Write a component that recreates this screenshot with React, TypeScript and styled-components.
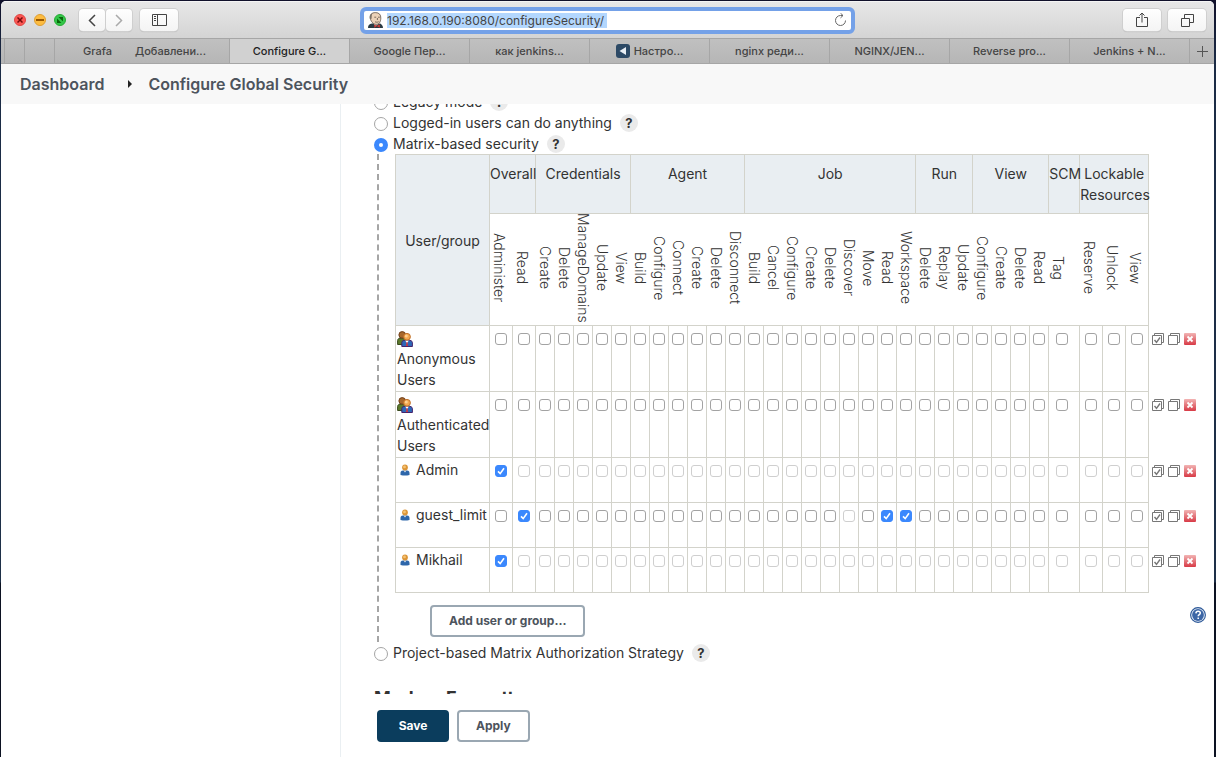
import React, { useState } from 'react';
import styled, { createGlobalStyle, css } from 'styled-components';

const GlobalStyle = createGlobalStyle`
  *, *::before, *::after { box-sizing: border-box; }
  html, body { margin: 0; }
  body {
    background: linear-gradient(#10102a, #1b2b45 60px, #1e3048 582px, #0c1222 583px);
    color: #333;
    font: 14px/21px Inter, "Liberation Sans", sans-serif;
  }
  button, input { font: inherit; }
`;

const Window = styled.div`
  display: flex;
  flex-direction: column;
  height: calc(100vh - 1px);
  margin: 1px 2px 0 1px;
  overflow: hidden;
  border-radius: 5px 5px 0 0;
  background: #fff;
`;

/* ---------- browser chrome ---------- */

const Toolbar = styled.header`
  display: grid;
  grid-template-columns: 1fr minmax(200px, 495px) 1fr;
  align-items: center;
  height: 37px;
  flex: none;
  padding: 0 8px;
  background: linear-gradient(#e7e7e7, #d4d4d4);
  border-top: 1px solid #f4f4f4;
`;

const ToolGroup = styled.div<{ $end?: boolean }>`
  display: flex;
  align-items: center;
  gap: ${(p) => (p.$end ? 7 : 8)}px;
  padding-left: 5px;
  justify-content: ${(p) => (p.$end ? 'flex-end' : 'flex-start')};
`;

const Lights = styled.div`
  display: flex;
  gap: 8px;
  margin-right: 5px;
`;

const Light = styled.button<{ $color: string; $edge: string }>`
  display: grid;
  place-items: center;
  width: 12px;
  height: 12px;
  padding: 0;
  border: 1px solid ${(p) => p.$edge};
  border-radius: 50%;
  background: ${(p) => p.$color};
`;

const NavPair = styled.div`
  display: flex;
  gap: 1px;
`;

const ToolButton = styled.button<{ $wide?: boolean }>`
  display: grid;
  place-items: center;
  width: ${(p) => (p.$wide ? 38 : 26)}px;
  height: 22px;
  padding: 0;
  border: 0;
  border-radius: 4px;
  background: linear-gradient(#fefefe, #f4f4f4);
  box-shadow: 0 0 0 1px #cfcfcf, 0 1px 1px #b0b0b0;
`;

const Address = styled.label`
  display: flex;
  align-items: center;
  gap: 4px;
  height: 27px;
  padding: 0 4px;
  border: 4px solid #74a1e8;
  border-radius: 6px;
  background: #fff;
`;

const AddressInput = styled.input`
  width: 220px;
  height: 15px;
  padding: 0;
  border: 0;
  outline: 0;
  background: #b3d7fe;
  color: #444;
  font-size: 12px;
  line-height: 15px;
`;

const Reload = styled.button`
  display: grid;
  margin-left: auto;
  padding: 0;
  border: 0;
  background: none;
`;

const TabBar = styled.nav`
  display: flex;
  flex: none;
  height: 26px;
  border: solid #a6a6a6;
  border-width: 1px 0;
  background: linear-gradient(#c0c0c0, #b6b6b6);
`;

const Tab = styled.a<{ $active?: boolean; $width?: number; $cut?: boolean }>`
  display: flex;
  align-items: center;
  justify-content: ${(p) => (p.$cut ? 'flex-end' : 'center')};
  gap: 4px;
  flex: ${(p) => (p.$width ? `0 0 ${p.$width}px` : '1 1 0')};
  overflow: hidden;
  border-right: ${(p) => (p.$cut ? 0 : 1)}px solid #a6a6a6;
  background: ${(p) => (p.$active ? '#d1d1d1' : 'transparent')};
  color: ${(p) => (p.$active ? '#222' : '#444')};
  font-size: 11px;
  font-weight: 500;
  text-decoration: none;
  white-space: nowrap;
`;

const NewTab = styled.button`
  display: grid;
  place-items: center;
  width: 24px;
  padding: 0;
  border: 0;
  background: none;
`;

/* ---------- page ---------- */

const Breadcrumbs = styled.nav`
  display: flex;
  align-items: center;
  gap: 16px;
  flex: none;
  height: 40px;
  padding: 0 19px;
  background: #f8f8f8;
`;

const Crumb = styled.a`
  color: #4d545d;
  font-size: 16px;
  font-weight: 600;
  text-decoration: none;
`;

const CrumbArrow = styled.svg`
  margin-left: 8px;
`;

const Body = styled.div`
  display: flex;
  flex: 1;
  min-height: 0;
`;

const SidePanel = styled.aside`
  flex: 0 0 340px;
  border-right: 1px solid #eaeff2;
`;

const Main = styled.main`
  display: flex;
  flex-direction: column;
  flex: 1;
  min-width: 0;
`;

const ScrollArea = styled.div`
  flex: 1;
  min-height: 0;
  padding: 0 8px 0 33px;
  overflow: hidden;
`;

const Form = styled.form`
  margin-top: -13px;
`;

const OptionRow = styled.div`
  display: flex;
  align-items: center;
  gap: 8px;
  height: 21px;
`;

const OptionLabel = styled.label`
  display: flex;
  align-items: center;
  gap: 5px;
`;

const Radio = styled.input`
  appearance: none;
  width: 14px;
  height: 14px;
  margin: 3px 0 0;
  border: 1px solid #a5a5a5;
  border-radius: 50%;
  background: #fff;
  &:checked {
    border: 5px solid #3b88fd;
  }
`;

const HelpButton = styled.button`
  width: 18px;
  height: 18px;
  padding: 0;
  border: 0;
  border-radius: 50%;
  background: #eaeaea;
  color: #333;
  font-size: 13px;
  font-weight: 700;
  line-height: 18px;
`;

const Nested = styled.div`
  margin-left: 3px;
  padding-left: 16px;
  border-left: 2px dashed #a5a5a5;
`;

const Matrix = styled.table`
  width: 802px;
  table-layout: fixed;
  border-collapse: collapse;
`;

const line = css`
  border: 1px solid #d3d3cb;
`;

const GroupHead = styled.th<{ $middle?: boolean }>`
  ${line}
  height: 59px;
  padding: ${(p) => (p.$middle ? '0' : '8px 0 0')};
  background: #e9eef2;
  font-weight: 400;
  vertical-align: ${(p) => (p.$middle ? 'middle' : 'top')};
`;

const PermissionHead = styled.th`
  height: 112px;
  padding: 0;
  border-bottom: 1px solid #d3d3cb;
  font-weight: 300;
  vertical-align: top;
  &:nth-last-child(2) {
    border-right: 1px solid #d3d3cb;
  }
`;

const Vertical = styled.span`
  display: flex;
  flex-direction: column;
  align-items: center;
  justify-content: center;
  height: 108px;
  line-height: 18px;
  white-space: nowrap;
  writing-mode: vertical-rl;
`;

const VerticalText = styled.span`
  writing-mode: vertical-rl;
`;

const UserCell = styled.th<{ $group?: boolean }>`
  ${line}
  height: ${(p) => (p.$group ? 66 : 45)}px;
  padding: ${(p) => (p.$group ? '2px 0 0 1px' : '1px 0 0 4px')};
  font-weight: 400;
  text-align: left;
  vertical-align: top;
`;

const UserName = styled.span<{ $group?: boolean }>`
  display: flex;
  flex-direction: ${(p) => (p.$group ? 'column' : 'row')};
  align-items: ${(p) => (p.$group ? 'flex-start' : 'center')};
  gap: ${(p) => (p.$group ? 1 : 6)}px;
  padding-top: ${(p) => (p.$group ? 3 : 0)}px;
`;

const PermissionCell = styled.td<{ $shift?: boolean }>`
  ${line}
  padding: 7px ${(p) => (p.$shift ? 5 : 0)}px 0 0;
  line-height: 0;
  text-align: center;
  vertical-align: top;
`;

const Check = styled.input`
  appearance: none;
  width: 12px;
  height: 12px;
  margin: 0;
  border: 1px solid #a3a3a3;
  border-radius: 3px;
  background: #fff;
  &:disabled {
    border-color: #cfcfcf;
  }
  &:checked {
    border-color: #3b88fd;
    background: #3b88fd
      url("data:image/svg+xml,%3Csvg xmlns='http://www.w3.org/2000/svg' viewBox='0 0 10 10'%3E%3Cpath d='M2 5.4 4.2 7.6 8 2.3' fill='none' stroke='white' stroke-width='1.6'/%3E%3C/svg%3E");
  }
`;

const ActionCell = styled.td`
  padding: 7px 0 0 3px;
  vertical-align: top;
`;

const Actions = styled.div`
  display: flex;
  gap: 4px;
`;

const IconButton = styled.button`
  display: grid;
  padding: 0;
  border: 0;
  background: none;
`;

const AddRow = styled.div`
  display: flex;
  align-items: flex-start;
  justify-content: space-between;
  padding: 12px 0 5px 35px;
`;

const HelpSlot = styled.div`
  padding-top: 2px;
`;

const Button = styled.button<{ $primary?: boolean }>`
  height: 32px;
  min-width: 72px;
  padding: 0 17px 1px;
  border: 2px solid ${(p) => (p.$primary ? '#0b3d5d' : '#9aa7b2')};
  border-radius: 4px;
  background: ${(p) => (p.$primary ? '#0b3d5d' : '#fff')};
  color: ${(p) => (p.$primary ? '#fff' : '#4d545d')};
  font-size: 12px;
  font-weight: 700;
`;

const SectionTitle = styled.h2`
  margin: 23px 0 0;
  font-size: 18px;
  line-height: 24px;
  font-weight: 700;
`;

const BottomBar = styled.footer`
  display: flex;
  gap: 8px;
  flex: none;
  padding: 16px 36px 15px;
  background: #fff;
`;

/* ---------- icons ---------- */

const JenkinsIcon = () => (
  <svg width="15" height="16" viewBox="0 0 15 16">
    <path d="M0 16c0-2.500 1-4 4-4.500l7-.3c2.500.5 4 2.300 4 4.800z" fill="#2b3b43" />
    <path d="M4.500 10.500 7.500 14l4-2.500V9.500z" fill="#f4f0ea" />
    <path d="M2.200 6C1.700 2.500 4 .6 7.500.6c3.700 0 5.500 2.200 5.300 5.600-.1 3.500-1.600 6.200-4.500 6.200C5.200 12.400 2.900 9.500 2.200 6z" fill="#ecd2b8" stroke="#4a3d35" strokeWidth=".7" />
    <path d="M1.900 7C1.300 3.500 2.800 1.400 4.600.9c-1 1.500-.8 3.200-1 5.800z" fill="#7a7066" />
    <path d="M6.300 5.200h1.900M10 5.200h1.800M9.400 6v2M7 9.800c1.300.6 2.500.5 3.700-.1" stroke="#4a3d35" strokeWidth=".7" fill="none" />
    <path d="M9 14 6.300 12.600v3.200zM8.600 14l3.200-1.400v3.200z" fill="#d33833" />
  </svg>
);

const GroupIcon = () => (
  <svg width="16" height="16" viewBox="0 0 16 16">
    <path d="M.6 13.500V9.700C.8 7.500 2 7 4.500 7S8 7.500 8 9.700v3.800z" fill="#5c7a2c" stroke="#37481c" />
    <circle cx="5.200" cy="3.900" r="3.300" fill="#a8682c" stroke="#70401c" />
    <path d="M4.800 15.500v-4c.2-1.800 1.500-2.300 5.200-2.300s5.200.5 5.400 2.300v4z" fill="#2e68b8" stroke="#46246c" />
    <path d="m8.300 9.500 1.700 3.300 1.700-3.300z" fill="#fff" />
    <path d="M9.500 11h1l.4 4h-1.800z" fill="#d33" />
    <circle cx="10" cy="5.800" r="3.400" fill="#f3a850" stroke="#c0702a" />
    <circle cx="9.300" cy="4.900" r="1.500" fill="#ffd08e" />
  </svg>
);

const PersonIcon = () => (
  <svg width="10" height="12" viewBox="0 0 10 12">
    <path d="M.5 11V8.800C.7 7 2 6.300 5 6.300s4.300.7 4.500 2.500V11q-4.500 1-9 0z" fill="#2d66aa" />
    <path d="m3.600 6.500 1.400 2 1.400-2z" fill="#dce8f5" />
    <circle cx="5" cy="3.500" r="2.900" fill="#dc9638" />
    <circle cx="4.500" cy="2.900" r="1.400" fill="#f5c272" />
  </svg>
);

const StackIcon = ({ checked }: { checked?: boolean }) => (
  <svg width="12" height="12" viewBox="0 0 12 12" fill="none" stroke="#777">
    <path d="M2.500 2V.5h9v9H10M.5 2.500h9v9h-9z" />
    {checked && <path d="m2.500 7 2 2.300L8 4.500" strokeWidth="1.400" />}
  </svg>
);

const RemoveIcon = () => (
  <svg width="12" height="12" viewBox="0 0 12 12">
    <defs>
      <linearGradient id="remove" x2="0" y2="1">
        <stop stopColor="#f2b4b4" />
        <stop offset=".5" stopColor="#e4777c" />
        <stop offset="1" stopColor="#d83a46" />
      </linearGradient>
    </defs>
    <rect width="12" height="12" rx="1" fill="url(#remove)" />
    <path d="m3.500 3.500 5 5m0-5-5 5" stroke="#fff" strokeWidth="1.800" />
  </svg>
);

const BlueHelpIcon = () => (
  <svg width="16" height="16" viewBox="0 0 16 16">
    <circle cx="8" cy="8" r="7.400" fill="#e6edf7" stroke="#2b5797" strokeWidth="1.100" />
    <circle cx="8" cy="8" r="5.900" fill="#3c66a6" />
    <path d="M5.900 6.400C6 5 6.800 4.300 8.100 4.300c1.300 0 2.200.7 2.200 1.800 0 1.600-2.100 1.600-2.100 3.200M8.200 10.500v1.500" stroke="#fff" strokeWidth="1.500" fill="none" />
  </svg>
);

/* ---------- data ---------- */

const groups: { name: string; permissions: string[] }[] = [
  { name: 'Overall', permissions: ['Administer', 'Read'] },
  { name: 'Credentials', permissions: ['Create', 'Delete', 'ManageDomains', 'Update', 'View'] },
  { name: 'Agent', permissions: ['Build', 'Configure', 'Connect', 'Create', 'Delete', 'Disconnect'] },
  { name: 'Job', permissions: ['Build', 'Cancel', 'Configure', 'Create', 'Delete', 'Discover', 'Move', 'Read', 'Workspace'] },
  { name: 'Run', permissions: ['Delete', 'Replay', 'Update'] },
  { name: 'View', permissions: ['Configure', 'Create', 'Delete', 'Read'] },
  { name: 'SCM', permissions: ['Tag'] },
  { name: 'Lockable Resources', permissions: ['Reserve', 'Unlock', 'View'] },
];

const columns = groups.flatMap((g) => g.permissions.map((p) => ({ group: g.name, key: `${g.name}/${p}`, label: p })));

const columnWidth = (group: string) =>
  group === 'SCM' ? 31 : group === 'Overall' || group === 'Lockable Resources' ? 23 : 19;

const users = [
  { name: 'Anonymous Users', group: true, granted: [] },
  { name: 'Authenticated Users', group: true, granted: [] },
  { name: 'Admin', granted: ['Overall/Administer'] },
  { name: 'guest_limit', granted: ['Overall/Read', 'Job/Read', 'Job/Workspace'] },
  { name: 'Mikhail', granted: ['Overall/Administer'] },
] as { name: string; group?: boolean; granted: string[] }[];

const tabs = ['Google Пер...', 'как jenkins...', 'Настро...', 'nginx реди...', 'NGINX/JEN...', 'Reverse pro...', 'Jenkins + N...'];

const Col = styled.col<{ $width: number }>`
  width: ${(p) => p.$width}px;
`;

function Option({ label, value, current, onPick }: { label: string; value: string; current: string; onPick: (v: string) => void }) {
  return (
    <OptionRow>
      <OptionLabel>
        <Radio type="radio" name="strategy" checked={current === value} onChange={() => onPick(value)} />
        {label}
      </OptionLabel>
      <HelpButton type="button" aria-label={`Help for ${label}`}>?</HelpButton>
    </OptionRow>
  );
}

function UserRow({ user }: { user: (typeof users)[number] }) {
  const [granted, setGranted] = useState(user.granted);
  const isAdmin = granted.includes('Overall/Administer');
  const toggle = (key: string) =>
    setGranted((g) => (g.includes(key) ? g.filter((k) => k !== key) : [...g, key]));
  const isLocked = (key: string) =>
    (isAdmin && key !== 'Overall/Administer') || (key === 'Job/Discover' && granted.includes('Job/Read'));

  return (
    <tr>
      <UserCell scope="row" $group={user.group}>
        <UserName $group={user.group}>
          {user.group ? <GroupIcon /> : <PersonIcon />}
          <span>{user.name}</span>
        </UserName>
      </UserCell>
      {columns.map((c) => (
        <PermissionCell key={c.key} $shift={c.group === 'SCM'}>
          <Check
            type="checkbox"
            aria-label={`${user.name}: ${c.key}`}
            checked={granted.includes(c.key)}
            disabled={isLocked(c.key)}
            onChange={() => toggle(c.key)}
          />
        </PermissionCell>
      ))}
      <ActionCell>
        <Actions>
          <IconButton type="button" aria-label="Select all"><StackIcon checked /></IconButton>
          <IconButton type="button" aria-label="Unselect all"><StackIcon /></IconButton>
          <IconButton type="button" aria-label="Remove"><RemoveIcon /></IconButton>
        </Actions>
      </ActionCell>
    </tr>
  );
}

export default function App() {
  const [strategy, setStrategy] = useState('matrix');

  return (
    <>
      <GlobalStyle />
      <Window>
        <Toolbar>
          <ToolGroup>
            <Lights>
              <Light $color="#fc5753" $edge="#df4744" aria-label="Close">
                <svg width="6" height="6" viewBox="0 0 6 6" stroke="#730b0b" strokeWidth="1.500"><path d="m.5.5 5 5m0-5-5 5" /></svg>
              </Light>
              <Light $color="#fdbc40" $edge="#de9f34" aria-label="Minimize">
                <svg width="8" height="2" viewBox="0 0 8 2"><path d="M0 0h8v2H0z" fill="#995700" /></svg>
              </Light>
              <Light $color="#33c748" $edge="#27aa35" aria-label="Full screen">
                <svg width="6" height="6" viewBox="0 0 6 6" fill="#0b650d"><path d="M0 1.500V6h4.500zM1.500 0H6v4.500z" /></svg>
              </Light>
            </Lights>
            <NavPair>
              <ToolButton aria-label="Back">
                <svg width="8" height="13" viewBox="0 0 8 13" fill="none" stroke="#444" strokeWidth="1.500"><path d="M7 1 1.500 6.500 7 12" /></svg>
              </ToolButton>
              <ToolButton aria-label="Forward">
                <svg width="8" height="13" viewBox="0 0 8 13" fill="none" stroke="#aaa" strokeWidth="1.500"><path d="m1 1 5.500 5.500L1 12" /></svg>
              </ToolButton>
            </NavPair>
            <ToolButton $wide aria-label="Sidebar">
              <svg width="15" height="12" viewBox="0 0 15 12" fill="none" stroke="#444"><path d="M.5.5h14v11H.5zM5.500.5v11M2 2.500h2M2 4.500h2M2 6.500h2" /></svg>
            </ToolButton>
          </ToolGroup>
          <Address>
            <JenkinsIcon />
            <AddressInput aria-label="Address" defaultValue="192.168.0.190:8080/configureSecurity/" />
            <Reload type="button" aria-label="Reload">
              <svg width="13" height="14" viewBox="0 0 13 14" fill="none" stroke="#666"><path d="M11.500 7.500a5 5 0 1 1-5-5H9M6.500.2 9 2.500 6.500 4.900" /></svg>
            </Reload>
          </Address>
          <ToolGroup $end>
            <ToolButton $wide aria-label="Share">
              <svg width="12" height="16" viewBox="0 0 12 16" fill="none" stroke="#444"><path d="M4 5.500H.5v9h11v-9H8M6 10.500V1M3.500 3.500 6 1l2.500 2.500" /></svg>
            </ToolButton>
            <ToolButton $wide aria-label="Show all tabs">
              <svg width="13" height="13" viewBox="0 0 13 13" fill="none" stroke="#444"><path d="M.5 4.500h8v8h-8zM3.500 4V.5h9v8H9" /></svg>
            </ToolButton>
          </ToolGroup>
        </Toolbar>

        <TabBar>
          <Tab href="#" $width={4} aria-label="Pinned tab" />
          <Tab href="#" $width={20} aria-label="Pinned tab" />
          <Tab href="#" $width={30} aria-label="Pinned tab" />
          <Tab href="#" $width={57} $cut>Grafa</Tab>
          <Tab href="#" $width={118}>Добавлени...</Tab>
          <Tab href="#" $active>Configure G...</Tab>
          {tabs.map((t) => (
            <Tab href="#" key={t}>
              {t === 'Настро...' && (
                <svg width="14" height="14" viewBox="0 0 14 14">
                  <rect width="14" height="14" rx="3" fill="#2d4a66" />
                  <path d="M10 3v8L3.500 7z" fill="#e8eef4" />
                </svg>
              )}
              {t}
            </Tab>
          ))}
          <NewTab aria-label="New tab">
            <svg width="11" height="11" viewBox="0 0 11 11" stroke="#555"><path d="M5.500 0v11M0 5.500h11" /></svg>
          </NewTab>
        </TabBar>

        <Breadcrumbs>
          <Crumb href="#">Dashboard</Crumb>
          <CrumbArrow width="4" height="8" viewBox="0 0 4 8"><path d="M0 0v8l4-4z" fill="#222" /></CrumbArrow>
          <Crumb href="#">Configure Global Security</Crumb>
        </Breadcrumbs>

        <Body>
          <SidePanel />
          <Main>
            <ScrollArea>
              <Form id="security" onSubmit={(e) => e.preventDefault()}>
                <Option label="Legacy mode" value="legacy" current={strategy} onPick={setStrategy} />
                <Option label="Logged-in users can do anything" value="loggedIn" current={strategy} onPick={setStrategy} />
                <Option label="Matrix-based security" value="matrix" current={strategy} onPick={setStrategy} />
                <Nested>
                  <Matrix>
                    <colgroup>
                      <Col $width={94} />
                      {columns.map((c) => <Col key={c.key} $width={columnWidth(c.group)} />)}
                      <Col $width={49} />
                    </colgroup>
                    <thead>
                      <tr>
                        <GroupHead rowSpan={2} $middle>User/group</GroupHead>
                        {groups.map((g) => <GroupHead key={g.name} colSpan={g.permissions.length}>{g.name}</GroupHead>)}
                        <td />
                      </tr>
                      <tr>
                        {columns.map((c) => (
                          <PermissionHead key={c.key}>
                            <Vertical><VerticalText>{c.label}</VerticalText></Vertical>
                          </PermissionHead>
                        ))}
                        <td />
                      </tr>
                    </thead>
                    <tbody>
                      {users.map((u) => <UserRow key={u.name} user={u} />)}
                    </tbody>
                  </Matrix>
                  <AddRow>
                    <Button type="button">Add user or group...</Button>
                    <HelpSlot>
                      <IconButton type="button" aria-label="Help"><BlueHelpIcon /></IconButton>
                    </HelpSlot>
                  </AddRow>
                </Nested>
                <Option label="Project-based Matrix Authorization Strategy" value="project" current={strategy} onPick={setStrategy} />
                <SectionTitle>Markup Formatter</SectionTitle>
              </Form>
            </ScrollArea>
            <BottomBar>
              <Button type="submit" form="security" $primary>Save</Button>
              <Button type="button">Apply</Button>
            </BottomBar>
          </Main>
        </Body>
      </Window>
    </>
  );
}
